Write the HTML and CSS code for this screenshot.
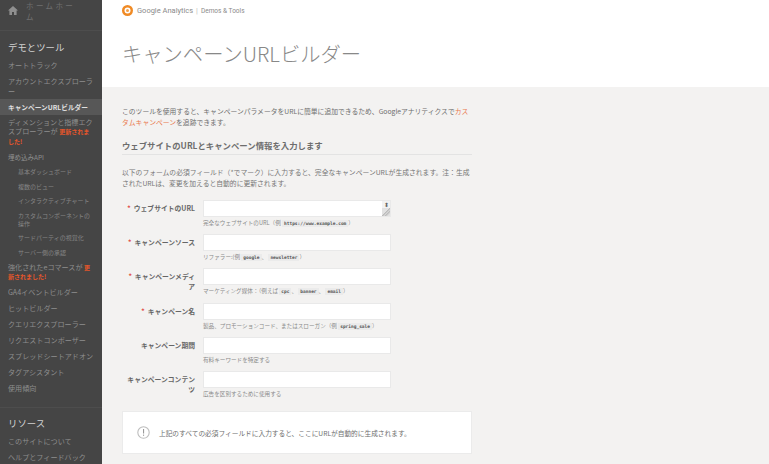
FILE: index.html
```html
<!DOCTYPE html>
<html lang="ja">
<head>
<meta charset="utf-8">
<title>キャンペーンURLビルダー</title>
<link rel="stylesheet" href="styles.css">
</head>
<body>
<div class="page">
  <nav class="side">
    <div class="home">
      <svg class="home-icon" width="10" height="9" viewBox="0 0 10 9"><path d="M5 0 L10 4.5 H8.6 V9 H6 V6 H4 V9 H1.4 V4.5 H0 Z" fill="#8f8f8f"/></svg>
      <span class="home-text">ホームホーム</span>
    </div>
    <div class="group">
      <h2 class="side-title">デモとツール</h2>
      <a class="item">オートトラック</a>
      <a class="item">アカウントエクスプローラー</a>
      <a class="item active">キャンペーンURLビルダー</a>
      <a class="item dim">ディメンションと指標エクスプローラーが <b class="new">更新されました!</b></a>
      <a class="item api">埋め込みAPI</a>
      <a class="sub">基本ダッシュボード</a>
      <a class="sub">複数のビュー</a>
      <a class="sub">インタラクティブチャート</a>
      <a class="sub">カスタムコンポーネントの操作</a>
      <a class="sub">サードパーティの視覚化</a>
      <a class="sub">サーバー側の承認</a>
      <a class="item ecom">強化されたeコマースが <b class="new">更新されました!</b></a>
      <a class="item">GA4イベントビルダー</a>
      <a class="item">ヒットビルダー</a>
      <a class="item">クエリエクスプローラー</a>
      <a class="item">リクエストコンポーザー</a>
      <a class="item">スプレッドシートアドオン</a>
      <a class="item">タグアシスタント</a>
      <a class="item">使用傾向</a>
    </div>
    <div class="group res">
      <h2 class="side-title">リソース</h2>
      <a class="item">このサイトについて</a>
      <a class="item">ヘルプとフィードバック</a>
    </div>
  </nav>
  <main class="main">
    <header class="head">
      <div class="brand">
        <svg width="11" height="11" viewBox="0 0 11 11"><circle cx="5.5" cy="5.5" r="5.5" fill="#f08a24"/><circle cx="5.5" cy="5.5" r="3" fill="#fff"/><circle cx="5.5" cy="5.5" r="1.5" fill="#f4a04a"/></svg>
        <span class="brand-name">Google Analytics</span><span class="brand-sep">|</span><span class="brand-tools">Demos &amp; Tools</span>
      </div>
      <h1 class="title">キャンペーン<span class="thin">URL</span>ビルダー</h1>
    </header>
    <section class="content">
      <p class="lead">このツールを使用すると、キャンペーンパラメータをURLに簡単に追加できるため、Googleアナリティクスで<a class="link">カスタムキャンペーン</a>を追跡できます。</p>
      <h3 class="section">ウェブサイトのURLとキャンペーン情報を入力します</h3>
      <p class="intro">以下のフォームの必須フィールド（*でマーク）に入力すると、完全なキャンペーンURLが生成されます。注：生成されたURLは、変更を加えると自動的に更新されます。</p>
      <form class="form">
        <label class="label"><span class="req">*</span>ウェブサイトのURL</label>
        <div class="field">
          <div class="input area"><span class="spin">⬍</span><span class="grip"></span></div>
          <div class="hint">完全なウェブサイトのURL（例 <code>https://www.example.com</code>）</div>
        </div>
        <label class="label"><span class="req">*</span>キャンペーンソース</label>
        <div class="field">
          <div class="input"></div>
          <div class="hint">リファラー:(例 <code>google</code>、 <code>newsletter</code>）</div>
        </div>
        <label class="label"><span class="req">*</span>キャンペーンメディア</label>
        <div class="field">
          <div class="input"></div>
          <div class="hint">マーケティング媒体：（例えば <code>cpc</code>、 <code>banner</code>、 <code>email</code>）</div>
        </div>
        <label class="label"><span class="req">*</span>キャンペーン名</label>
        <div class="field">
          <div class="input"></div>
          <div class="hint">製品、プロモーションコード、またはスローガン（例 <code>spring_sale</code>）</div>
        </div>
        <label class="label">キャンペーン期間</label>
        <div class="field">
          <div class="input"></div>
          <div class="hint">有料キーワードを特定する</div>
        </div>
        <label class="label">キャンペーンコンテンツ</label>
        <div class="field">
          <div class="input"></div>
          <div class="hint">広告を区別するために使用する</div>
        </div>
      </form>
      <div class="notice">
        <svg width="13" height="13" viewBox="0 0 13 13"><circle cx="6.5" cy="6.5" r="5.7" fill="none" stroke="#bdbdbd" stroke-width="1.1"/><rect x="6" y="3" width="1.1" height="4.5" fill="#9a9a9a"/><rect x="6" y="8.6" width="1.1" height="1.2" fill="#9a9a9a"/></svg>
        <span>上記のすべての必須フィールドに入力すると、ここにURLが自動的に生成されます。</span>
      </div>
    </section>
  </main>
</div>
</body>
</html>
```
FILE: styles.css
```css
* { box-sizing: border-box; }
html, body { margin: 0; padding: 0; }
body {
  width: 769px;
  height: 464px;
  overflow: hidden;
  font-family: "Noto Sans CJK JP", sans-serif;
  color: #666;
  background: #f3f2f1;
}
.page { display: flex; height: 464px; overflow: hidden; }

/* sidebar */
.side {
  flex: 0 0 102px;
  width: 102px;
  height: 464px;
  overflow: hidden;
  background: #454545;
  color: #8e8e8e;
}
.home {
  display: flex;
  align-items: flex-start;
  height: 31px;
  padding: 0 8px;
  gap: 8px;
  border-bottom: 1px solid #4d4d4d;
}
.home-icon { flex: none; margin-top: 6px; }
.home-text { width: 54px; font-size: 7.5px; line-height: 11px; letter-spacing: 2.4px; color: #6f6f6f; }
.group { padding: 9px 8px 11px; }
.side-title { margin: 0 0 3px; font-size: 9.4px; line-height: 14px; font-weight: 400; color: #d2d2d2; }
.item {
  display: block;
  font-size: 7.1px;
  line-height: 10px;
  padding: 3px 0;
  color: #8e8e8e;
}
.item.active {
  margin: 0 -8px;
  padding: 3px 8px;
  height: 16px;
  background: #575757;
  color: #e0e0e0;
  font-weight: 700;
  font-size: 6.7px;
  white-space: nowrap;
}
.item.dim { line-height: 9.4px; }
.sub { display: block; font-size: 6px; line-height: 8px; padding: 3.25px 0 3.25px 10px; color: #868686; }
.item.api { font-size: 6.5px; }
.item.ecom { line-height: 8px; padding: 3px 0 3px; }
.new { color: #e8562a; font-size: 6px; font-weight: 700; line-height: 8px; }
.res { padding-top: 8px; padding-bottom: 0; border-top: 1px solid #4d4d4d; }

/* main */
.main { flex: 1; min-width: 0; }
.head { height: 87px; background: #fff; padding: 5px 20px 0; }
.brand { display: flex; align-items: center; gap: 3px; height: 11px; color: #8a8a8a; font-size: 7.5px; font-family: "Roboto", sans-serif; }
.brand svg { margin-right: 1px; }
.brand-sep { color: #bbb; }
.brand-tools { font-size: 6.5px; }
.title { margin: 22px 0 0; font-size: 20.3px; line-height: 30px; font-weight: 300; color: #888; }
.thin { font-weight: 300; }
.content { width: 390px; padding: 19px 20px 0; }
.lead { margin: 0; font-size: 6.8px; line-height: 11px; color: #6e6e6e; }
.link { color: #ea7a4f; }
.section {
  margin: 10px 0 0;
  padding-bottom: 1px;
  border-bottom: 1px solid #e3e3e3;
  font-size: 8.4px;
  line-height: 15px;
  font-weight: 700;
  color: #6d6d6d;
}
.intro { margin: 12px 0 0; font-size: 6.8px; line-height: 11px; color: #757575; }
.form {
  display: grid;
  grid-template-columns: 73px 188px;
  column-gap: 8px;
  margin-top: 11px;
}
.label {
  text-align: right;
  font-size: 6.8px;
  line-height: 10px;
  font-weight: 700;
  color: #666;
  padding-top: 3px;
}
.req { color: #e2504a; margin-right: 3px; }
.field { height: 34.2px; }
.input { height: 17px; background: #fff; border: 1px solid #e9e9e9; position: relative; }
.area { overflow: hidden; }
.spin { position: absolute; right: 0; top: 0; width: 8px; height: 8px; font-size: 6px; line-height: 8px; text-align: center; color: #666; background: #f2f2f2; }
.grip { position: absolute; right: 0; bottom: 0; width: 8px; height: 8px; background: linear-gradient(135deg, #e2e2e2 50%, #bbb 50%, #e2e2e2 68%, #bbb 68%, #e2e2e2 85%); }
.hint { margin-top: 1px; font-size: 5.6px; line-height: 10px; color: #8a8a8a; white-space: nowrap; }
code { font-family: "DejaVu Sans Mono", monospace; font-size: 4.5px; font-weight: 700; color: #555; background: #ebebeb; padding: 1px 2px; }
.notice {
  display: flex;
  align-items: center;
  gap: 9px;
  height: 43px;
  margin-top: 6px;
  padding-left: 14px;
  background: #fff;
  border: 1px solid #ebebeb;
  font-size: 6.7px;
  color: #6e6e6e;
}
```
